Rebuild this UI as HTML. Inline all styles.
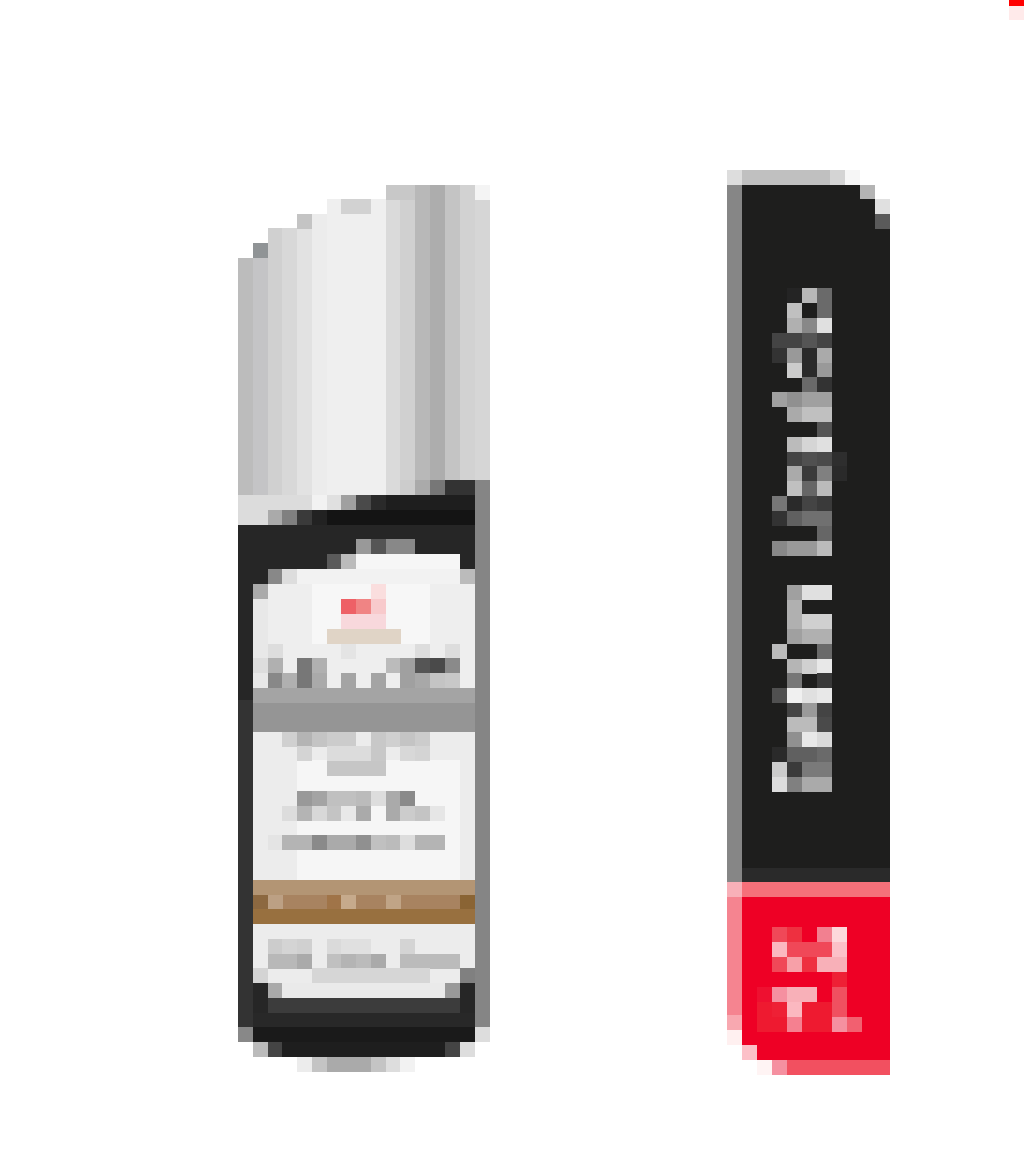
<!DOCTYPE html>
<html><head><meta charset="utf-8"><style>
html,body{margin:0;padding:0;background:#fff}
body{width:1024px;height:1156px;position:relative;overflow:hidden}
div{position:absolute}
i{position:absolute;width:15px;height:15px;display:block}
</style></head><body>
<div style="left:1009px;top:0;width:15px;height:6px;background:#f00"></div>
<div style="left:1009px;top:6px;width:15px;height:14px;background:#ffeaea"></div>

<div style="left:238px;top:258px;width:15px;height:267px;background:#bcbcbc"></div>
<div style="left:253px;top:243px;width:15px;height:282px;background:#c4c4c6"></div>
<div style="left:253px;top:243px;width:15px;height:15px;background:#909496"></div>
<div style="left:268px;top:228px;width:14px;height:267px;background:#d0d0d0"></div>
<div style="left:282px;top:228px;width:15px;height:267px;background:#d8d8d8"></div>
<div style="left:297px;top:214px;width:15px;height:281px;background:#e2e2e2"></div>
<div style="left:297px;top:214px;width:15px;height:15px;background:#c4c4c4"></div>
<div style="left:312px;top:214px;width:15px;height:281px;background:#ececec"></div>
<div style="left:327px;top:199px;width:59px;height:296px;background:#efefef"></div>
<div style="left:341px;top:199px;width:30px;height:15px;background:#d2d2d2"></div>
<div style="left:386px;top:185px;width:14px;height:310px;background:#dadada"></div>
<div style="left:400px;top:185px;width:15px;height:295px;background:#d0d0d0"></div>
<div style="left:386px;top:185px;width:29px;height:15px;background:#c8c8c8"></div>
<div style="left:415px;top:185px;width:15px;height:295px;background:#b8b8b8"></div>
<div style="left:430px;top:185px;width:15px;height:295px;background:#adadad"></div>
<div style="left:445px;top:185px;width:15px;height:295px;background:#c4c4c4"></div>
<div style="left:460px;top:185px;width:15px;height:295px;background:#d2d2d2"></div>
<div style="left:475px;top:185px;width:15px;height:295px;background:#d6d6d6"></div>
<div style="left:475px;top:185px;width:15px;height:15px;background:#f4f4f4"></div>
<i style="left:400px;top:480px;background:#ccc"></i>
<i style="left:415px;top:480px;background:#aaa"></i>
<i style="left:430px;top:480px;background:#777"></i>
<i style="left:445px;top:480px;background:#333"></i>
<i style="left:460px;top:480px;background:#333"></i>
<div style="left:238px;top:495px;width:74px;height:15px;background:#dcdcdc"></div>
<i style="left:312px;top:495px;background:#f2f2f2"></i>
<i style="left:327px;top:495px;background:#e0e0e0"></i>
<i style="left:341px;top:495px;background:#a0a0a0"></i>
<i style="left:356px;top:495px;background:#4a4a4a"></i>
<i style="left:371px;top:495px;background:#2a2a2a"></i>
<div style="left:386px;top:495px;width:89px;height:15px;background:#1e1e1e"></div>
<div style="left:238px;top:510px;width:30px;height:15px;background:#dcdcdc"></div>
<i style="left:268px;top:510px;background:#aaa"></i>
<i style="left:282px;top:510px;background:#808080"></i>
<i style="left:297px;top:510px;background:#3a3a3a"></i>
<i style="left:312px;top:510px;background:#222"></i>
<div style="left:327px;top:510px;width:148px;height:15px;background:#141414"></div>
<div style="left:238px;top:525px;width:237px;height:502px;background:#262626"></div>
<div style="left:238px;top:700px;width:15px;height:330px;background:#333"></div>
<div style="left:475px;top:480px;width:15px;height:547px;background:#858585"></div>
<i style="left:238px;top:1027px;background:#888"></i>
<i style="left:475px;top:1027px;background:#ddd"></i>
<i style="left:356px;top:539px;background:#999"></i>
<i style="left:371px;top:539px;background:#555"></i>
<i style="left:386px;top:539px;background:#888"></i>
<i style="left:400px;top:539px;background:#888"></i>
<i style="left:327px;top:554px;background:#5a5a5a"></i>
<i style="left:341px;top:554px;background:#bbb"></i>
<div style="left:356px;top:554px;width:104px;height:15px;background:#f6f6f6"></div>
<i style="left:268px;top:569px;background:#888"></i>
<i style="left:282px;top:569px;background:#ddd"></i>
<div style="left:297px;top:569px;width:163px;height:15px;background:#f2f2f2"></div>
<i style="left:460px;top:569px;background:#bbb"></i>
<i style="left:253px;top:584px;background:#aaa"></i>
<div style="left:268px;top:584px;width:207px;height:104px;background:#eeeeee"></div>
<div style="left:253px;top:599px;width:15px;height:89px;background:#e8e8e8"></div>
<div style="left:312px;top:584px;width:118px;height:60px;background:#f7f7f7"></div>
<i style="left:371px;top:584px;background:#fadede"></i>
<i style="left:341px;top:599px;background:#ee6066"></i>
<i style="left:356px;top:599px;background:#f08484"></i>
<i style="left:371px;top:599px;background:#f8cacc"></i>
<div style="left:341px;top:614px;width:45px;height:15px;background:#f8d8dc"></div>
<div style="left:327px;top:629px;width:74px;height:15px;background:#e0d4c6"></div>
<i style="left:268px;top:644px;background:#ddd"></i>
<i style="left:341px;top:644px;background:#e4e4e4"></i>
<i style="left:415px;top:644px;background:#ddd"></i>
<i style="left:445px;top:644px;background:#ddd"></i>
<i style="left:253px;top:658px;background:#ddd"></i>
<i style="left:268px;top:658px;background:#b0b0b0"></i>
<i style="left:297px;top:658px;background:#777"></i>
<i style="left:312px;top:658px;background:#b0b0b0"></i>
<i style="left:386px;top:658px;background:#bbb"></i>
<i style="left:400px;top:658px;background:#a0a0a0"></i>
<i style="left:415px;top:658px;background:#555"></i>
<i style="left:430px;top:658px;background:#4a4a4a"></i>
<i style="left:445px;top:658px;background:#8a8a8a"></i>
<i style="left:268px;top:673px;background:#888"></i>
<i style="left:282px;top:673px;background:#b0b0b0"></i>
<i style="left:297px;top:673px;background:#777"></i>
<i style="left:312px;top:673px;background:#aaa"></i>
<i style="left:341px;top:673px;background:#a4a4a4"></i>
<i style="left:371px;top:673px;background:#a4a4a4"></i>
<i style="left:400px;top:673px;background:#a0a0a0"></i>
<i style="left:415px;top:673px;background:#a8a8a8"></i>
<i style="left:430px;top:673px;background:#c4c4c4"></i>
<i style="left:445px;top:673px;background:#c8c8c8"></i>
<div style="left:253px;top:688px;width:222px;height:15px;background:#a4a4a4"></div>
<div style="left:253px;top:703px;width:222px;height:29px;background:#959595"></div>
<div style="left:253px;top:732px;width:222px;height:148px;background:#ececec"></div>
<div style="left:297px;top:760px;width:163px;height:120px;background:#f6f6f6"></div>
<i style="left:282px;top:732px;background:#d0d0d0"></i>
<i style="left:297px;top:732px;background:#b4b4b4"></i>
<i style="left:312px;top:732px;background:#c4c4c4"></i>
<i style="left:327px;top:732px;background:#ccc"></i>
<i style="left:341px;top:732px;background:#ccc"></i>
<i style="left:371px;top:732px;background:#c8c8c8"></i>
<i style="left:386px;top:732px;background:#d0d0d0"></i>
<i style="left:400px;top:732px;background:#c4c4c4"></i>
<i style="left:415px;top:732px;background:#ccc"></i>
<i style="left:297px;top:746px;background:#d4d4d4"></i>
<div style="left:327px;top:746px;width:44px;height:15px;background:#dcdcdc"></div>
<i style="left:371px;top:746px;background:#c8c8c8"></i>
<i style="left:400px;top:746px;background:#d8d8d8"></i>
<i style="left:415px;top:746px;background:#d4d4d4"></i>
<div style="left:327px;top:761px;width:59px;height:15px;background:#c6c6c6"></div>
<i style="left:297px;top:791px;background:#999"></i>
<i style="left:312px;top:791px;background:#a4a4a4"></i>
<i style="left:327px;top:791px;background:#c0c0c0"></i>
<i style="left:341px;top:791px;background:#c0c0c0"></i>
<i style="left:356px;top:791px;background:#bbb"></i>
<i style="left:371px;top:791px;background:#ddd"></i>
<i style="left:386px;top:791px;background:#aaa"></i>
<i style="left:400px;top:791px;background:#8a8a8a"></i>
<i style="left:282px;top:806px;background:#dcdcdc"></i>
<i style="left:297px;top:806px;background:#b4b4b4"></i>
<i style="left:312px;top:806px;background:#d8d8d8"></i>
<i style="left:327px;top:806px;background:#c4c4c4"></i>
<i style="left:341px;top:806px;background:#e8e8e8"></i>
<i style="left:356px;top:806px;background:#aaa"></i>
<i style="left:386px;top:806px;background:#aaa"></i>
<i style="left:400px;top:806px;background:#ccc"></i>
<i style="left:415px;top:806px;background:#c4c4c4"></i>
<i style="left:430px;top:806px;background:#e6e6e6"></i>
<i style="left:268px;top:835px;background:#e4e4e4"></i>
<i style="left:282px;top:835px;background:#b4b4b4"></i>
<i style="left:297px;top:835px;background:#b4b4b4"></i>
<i style="left:312px;top:835px;background:#8a8a8a"></i>
<i style="left:327px;top:835px;background:#aaa"></i>
<i style="left:341px;top:835px;background:#aaa"></i>
<i style="left:356px;top:835px;background:#909090"></i>
<i style="left:371px;top:835px;background:#c0c0c0"></i>
<i style="left:386px;top:835px;background:#bbb"></i>
<i style="left:400px;top:835px;background:#ddd"></i>
<i style="left:415px;top:835px;background:#b4b4b4"></i>
<i style="left:430px;top:835px;background:#b4b4b4"></i>
<div style="left:253px;top:880px;width:222px;height:15px;background:#b39574"></div>
<div style="left:253px;top:895px;width:222px;height:14px;background:#a88360"></div>
<i style="left:253px;top:895px;background:#8c6840"></i>
<i style="left:268px;top:895px;background:#bca084"></i>
<i style="left:327px;top:895px;background:#a07448"></i>
<i style="left:341px;top:895px;background:#c6aa8c"></i>
<i style="left:386px;top:895px;background:#c0a486"></i>
<i style="left:460px;top:895px;background:#8a6434"></i>
<div style="left:253px;top:909px;width:222px;height:15px;background:#98703f"></div>
<div style="left:253px;top:924px;width:222px;height:59px;background:#ececec"></div>
<i style="left:268px;top:939px;background:#ccc"></i>
<i style="left:282px;top:939px;background:#d4d4d4"></i>
<i style="left:297px;top:939px;background:#d0d0d0"></i>
<i style="left:327px;top:939px;background:#dadada"></i>
<i style="left:341px;top:939px;background:#e0e0e0"></i>
<i style="left:356px;top:939px;background:#e0e0e0"></i>
<i style="left:400px;top:939px;background:#d4d4d4"></i>
<i style="left:268px;top:954px;background:#b8b8b8"></i>
<i style="left:282px;top:954px;background:#b8b8b8"></i>
<i style="left:297px;top:954px;background:#aaa"></i>
<i style="left:327px;top:954px;background:#c0c0c0"></i>
<i style="left:341px;top:954px;background:#b4b4b4"></i>
<i style="left:356px;top:954px;background:#bbb"></i>
<i style="left:371px;top:954px;background:#aaa"></i>
<div style="left:400px;top:954px;width:60px;height:15px;background:#bbb"></div>
<i style="left:253px;top:968px;background:#d4d4d4"></i>
<div style="left:312px;top:968px;width:118px;height:15px;background:#d6d6d6"></div>
<i style="left:460px;top:968px;background:#808080"></i>
<i style="left:268px;top:983px;background:#aaa"></i>
<div style="left:282px;top:983px;width:163px;height:15px;background:#eaeaea"></div>
<i style="left:445px;top:983px;background:#999"></i>
<div style="left:268px;top:998px;width:192px;height:15px;background:#3c3c3c"></div>
<div style="left:253px;top:1013px;width:222px;height:14px;background:#282828"></div>
<div style="left:253px;top:1027px;width:222px;height:15px;background:#1a1a1a"></div>
<i style="left:253px;top:1042px;background:#bbb"></i>
<i style="left:268px;top:1042px;background:#444"></i>
<div style="left:282px;top:1042px;width:163px;height:15px;background:#1e1e1e"></div>
<i style="left:445px;top:1042px;background:#444"></i>
<i style="left:460px;top:1042px;background:#ddd"></i>
<i style="left:297px;top:1057px;background:#ececec"></i>
<i style="left:312px;top:1057px;background:#c4c4c4"></i>
<div style="left:327px;top:1057px;width:44px;height:15px;background:#aaa"></div>
<i style="left:371px;top:1057px;background:#c4c4c4"></i>
<i style="left:386px;top:1057px;background:#ddd"></i>
<i style="left:400px;top:1057px;background:#f2f2f2"></i>

<i style="left:727px;top:170px;background:#ddd"></i>
<div style="left:742px;top:170px;width:88px;height:15px;background:#c0c0c0"></div>
<i style="left:830px;top:170px;background:#d4d4d4"></i>
<i style="left:845px;top:170px;background:#f6f6f6"></i>
<div style="left:727px;top:185px;width:15px;height:697px;background:#868686"></div>
<div style="left:742px;top:185px;width:118px;height:683px;background:#1e1e1d"></div>
<i style="left:860px;top:185px;background:#b4b4b4"></i>
<div style="left:860px;top:199px;width:15px;height:669px;background:#1e1e1d"></div>
<i style="left:875px;top:199px;background:#e0e0e0"></i>
<i style="left:875px;top:214px;background:#5a5a5a"></i>
<div style="left:875px;top:229px;width:15px;height:639px;background:#1e1e1d"></div>
<div style="left:742px;top:868px;width:148px;height:14px;background:#2a2a2a"></div>
<i style="left:787px;top:288px;background:#242424"></i><i style="left:802px;top:288px;background:#b8b8b8"></i><i style="left:817px;top:288px;background:#6a6a6a"></i>
<i style="left:787px;top:303px;background:#c0c0c0"></i><i style="left:817px;top:303px;background:#6a6a6a"></i>
<i style="left:787px;top:318px;background:#b0b0b0"></i><i style="left:802px;top:318px;background:#888"></i><i style="left:817px;top:318px;background:#e0e0e0"></i>
<i style="left:772px;top:333px;background:#444"></i><i style="left:787px;top:333px;background:#444"></i><i style="left:802px;top:333px;background:#555"></i><i style="left:817px;top:333px;background:#444"></i>
<i style="left:772px;top:348px;background:#333"></i><i style="left:787px;top:348px;background:#999"></i><i style="left:802px;top:348px;background:#2a2a2a"></i><i style="left:817px;top:348px;background:#aaa"></i>
<i style="left:787px;top:363px;background:#ccc"></i><i style="left:802px;top:363px;background:#2a2a2a"></i><i style="left:817px;top:363px;background:#999"></i>
<i style="left:802px;top:377px;background:#6a6a6a"></i><i style="left:817px;top:377px;background:#333"></i>
<i style="left:772px;top:392px;background:#a0a0a0"></i><i style="left:787px;top:392px;background:#909090"></i><i style="left:802px;top:392px;background:#a0a0a0"></i><i style="left:817px;top:392px;background:#a0a0a0"></i>
<i style="left:787px;top:407px;background:#aaa"></i><i style="left:802px;top:407px;background:#c0c0c0"></i><i style="left:817px;top:407px;background:#c0c0c0"></i>
<i style="left:817px;top:422px;background:#555"></i>
<i style="left:787px;top:437px;background:#bbb"></i><i style="left:802px;top:437px;background:#d5d5d5"></i><i style="left:817px;top:437px;background:#e0e0e0"></i>
<i style="left:787px;top:452px;background:#444"></i><i style="left:802px;top:452px;background:#505050"></i><i style="left:817px;top:452px;background:#4a4a4a"></i><i style="left:832px;top:452px;background:#2e2e2e"></i>
<i style="left:787px;top:466px;background:#aaa"></i><i style="left:802px;top:466px;background:#3a3a3a"></i><i style="left:817px;top:466px;background:#808080"></i><i style="left:832px;top:466px;background:#2a2a2a"></i>
<i style="left:787px;top:481px;background:#c0c0c0"></i><i style="left:802px;top:481px;background:#666"></i><i style="left:817px;top:481px;background:#bbb"></i>
<i style="left:772px;top:496px;background:#777"></i><i style="left:787px;top:496px;background:#2a2a2a"></i><i style="left:802px;top:496px;background:#444"></i><i style="left:817px;top:496px;background:#3a3a3a"></i>
<i style="left:772px;top:511px;background:#333"></i><i style="left:787px;top:511px;background:#606060"></i><i style="left:802px;top:511px;background:#707070"></i><i style="left:817px;top:511px;background:#707070"></i>
<i style="left:817px;top:526px;background:#666"></i>
<i style="left:772px;top:541px;background:#888"></i><i style="left:787px;top:541px;background:#999"></i><i style="left:802px;top:541px;background:#999"></i><i style="left:817px;top:541px;background:#bbb"></i>
<i style="left:787px;top:585px;background:#a0a0a0"></i><i style="left:802px;top:585px;background:#e0e0e0"></i><i style="left:817px;top:585px;background:#e0e0e0"></i>
<i style="left:787px;top:600px;background:#b0b0b0"></i>
<i style="left:787px;top:614px;background:#b0b0b0"></i><i style="left:802px;top:614px;background:#d0d0d0"></i><i style="left:817px;top:614px;background:#d0d0d0"></i>
<i style="left:787px;top:629px;background:#a0a0a0"></i><i style="left:802px;top:629px;background:#b0b0b0"></i><i style="left:817px;top:629px;background:#b0b0b0"></i>
<i style="left:772px;top:644px;background:#bbb"></i><i style="left:817px;top:644px;background:#6a6a6a"></i>
<i style="left:787px;top:659px;background:#b5b5b5"></i><i style="left:802px;top:659px;background:#d0d0d0"></i><i style="left:817px;top:659px;background:#e8e8e8"></i>
<i style="left:787px;top:673px;background:#777"></i><i style="left:817px;top:673px;background:#3a3a3a"></i>
<i style="left:772px;top:688px;background:#505050"></i><i style="left:787px;top:688px;background:#f0f0f0"></i><i style="left:802px;top:688px;background:#e0e0e0"></i><i style="left:817px;top:688px;background:#e8e8e8"></i>
<i style="left:787px;top:703px;background:#444"></i><i style="left:802px;top:703px;background:#9a9a9a"></i><i style="left:817px;top:703px;background:#444"></i>
<i style="left:787px;top:717px;background:#bbb"></i><i style="left:802px;top:717px;background:#bbb"></i><i style="left:817px;top:717px;background:#4a4a4a"></i>
<i style="left:787px;top:732px;background:#909090"></i><i style="left:802px;top:732px;background:#e8e8e8"></i><i style="left:817px;top:732px;background:#dadada"></i>
<i style="left:772px;top:747px;background:#2a2a2a"></i><i style="left:787px;top:747px;background:#606060"></i><i style="left:802px;top:747px;background:#606060"></i><i style="left:817px;top:747px;background:#6a6a6a"></i>
<i style="left:772px;top:762px;background:#ccc"></i><i style="left:787px;top:762px;background:#3a3a3a"></i><i style="left:802px;top:762px;background:#7a7a7a"></i><i style="left:817px;top:762px;background:#7a7a7a"></i>
<i style="left:772px;top:777px;background:#ddd"></i><i style="left:787px;top:777px;background:#808080"></i><i style="left:802px;top:777px;background:#aaa"></i><i style="left:817px;top:777px;background:#aaa"></i>
<i style="left:727px;top:882px;background:#f8b0b8"></i>
<div style="left:742px;top:882px;width:148px;height:15px;background:#f5707a"></div>
<div style="left:727px;top:897px;width:15px;height:130px;background:#f58490"></div>
<div style="left:742px;top:897px;width:148px;height:163px;background:#ee0025"></div>
<i style="left:727px;top:1015px;background:#f8a8b0"></i>
<i style="left:727px;top:1030px;background:#fff0f0"></i>
<i style="left:742px;top:1045px;background:#fcc0c8"></i>
<i style="left:757px;top:1060px;background:#fff4f4"></i>
<i style="left:772px;top:1060px;background:#f590a0"></i>
<div style="left:787px;top:1060px;width:103px;height:15px;background:#f25060"></div>
<i style="left:772px;top:927px;background:#f04858"></i><i style="left:787px;top:927px;background:#ee3040"></i><i style="left:817px;top:927px;background:#f28090"></i><i style="left:832px;top:927px;background:#fdd8dc"></i>
<i style="left:772px;top:942px;background:#fbb8c0"></i><i style="left:787px;top:942px;background:#f04858"></i><i style="left:802px;top:942px;background:#f04858"></i><i style="left:817px;top:942px;background:#f04858"></i><i style="left:832px;top:942px;background:#fcc0c8"></i>
<i style="left:772px;top:957px;background:#f04858"></i><i style="left:787px;top:957px;background:#f7a0a8"></i><i style="left:802px;top:957px;background:#ee3040"></i><i style="left:817px;top:957px;background:#f8b0b8"></i><i style="left:832px;top:957px;background:#f8b0b8"></i>
<i style="left:832px;top:972px;background:#ee2035"></i>
<i style="left:757px;top:987px;background:#ee1030"></i><i style="left:772px;top:987px;background:#f590a0"></i><i style="left:787px;top:987px;background:#f8b0b8"></i><i style="left:802px;top:987px;background:#f8b0b8"></i><i style="left:832px;top:987px;background:#f05060"></i>
<i style="left:757px;top:1002px;background:#ee1a30"></i><i style="left:772px;top:1002px;background:#ee2035"></i><i style="left:787px;top:1002px;background:#fbb8c0"></i><i style="left:802px;top:1002px;background:#ee1a30"></i><i style="left:817px;top:1002px;background:#ee1a30"></i><i style="left:832px;top:1002px;background:#f05060"></i>
<i style="left:757px;top:1017px;background:#ee1a30"></i><i style="left:772px;top:1017px;background:#ee1a30"></i><i style="left:787px;top:1017px;background:#f58090"></i><i style="left:802px;top:1017px;background:#ee1a30"></i><i style="left:817px;top:1017px;background:#ee1a30"></i><i style="left:832px;top:1017px;background:#f590a0"></i><i style="left:847px;top:1017px;background:#f26070"></i>
</body></html>
